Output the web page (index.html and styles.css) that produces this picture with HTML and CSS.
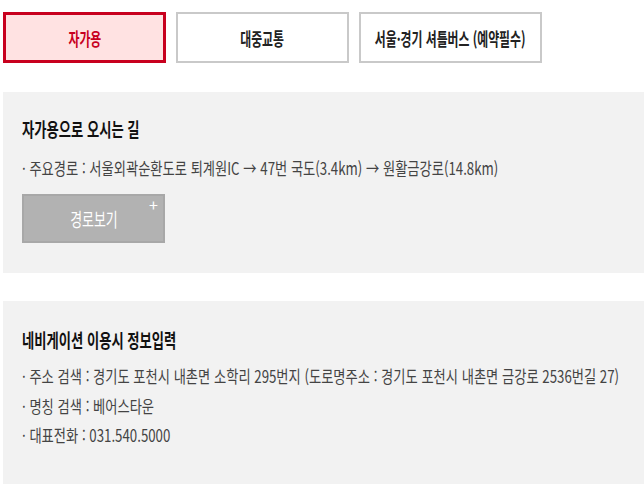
FILE: index.html
```html
<!DOCTYPE html>
<html lang="ko">
<head>
<meta charset="utf-8">
<link rel="stylesheet" href="styles.css">
</head>
<body>
<div class="page">
  <div class="tabs">
    <a class="tab tab-car active"><span class="cond">자가용</span></a>
    <a class="tab tab-bus"><span class="cond">대중교통</span></a>
    <a class="tab tab-shuttle"><span class="cond">서울·경기 셔틀버스 (예약필수)</span></a>
  </div>

  <section class="box box-car">
    <h3 class="title"><span class="cond">자가용으로 오시는 길</span></h3>
    <p class="line"><span class="cond">· 주요경로 : 서울외곽순환도로 퇴계원IC → 47번 국도(3.4km) → 원활금강로(14.8km)</span></p>
    <a class="route-btn"><span class="cond">경로보기</span><span class="plus">+</span></a>
  </section>

  <section class="box box-nav">
    <h3 class="title"><span class="cond">네비게이션 이용시 정보입력</span></h3>
    <ul class="list">
      <li class="line"><span class="cond">· 주소 검색 : 경기도 포천시 내촌면 소학리 295번지 (도로명주소 : 경기도 포천시 내촌면 금강로 2536번길 27)</span></li>
      <li class="line"><span class="cond">· 명칭 검색 : 베어스타운</span></li>
      <li class="line"><span class="cond">· 대표전화 : 031.540.5000</span></li>
    </ul>
  </section>
</div>
</body>
</html>
```

FILE: styles.css
```css
* { box-sizing: border-box; }
html, body { margin: 0; padding: 0; background: #fff; }
body {
  font-family: "Noto Sans CJK KR", "Noto Sans", sans-serif;
  color: #444;
  overflow: hidden;
}
.page { padding-left: 3px; overflow: hidden; }

.cond {
  display: inline-block;
  white-space: nowrap;
  transform: scaleX(0.78);
  transform-origin: 0 50%;
}

.tabs {
  display: flex;
  gap: 10px;
  margin-top: 12px;
  height: 51px;
}
.tab {
  display: flex;
  align-items: center;
  justify-content: center;
  border: 2px solid #c9c9c9;
  background: #fff;
  color: #222;
  font-size: 18px;
  font-weight: 700;
  text-decoration: none;
}
.tab .cond { transform-origin: 50% 50%; transform: scaleX(0.66); }
.tab-car { width: 163px; }
.tab-bus { width: 173px; }
.tab-shuttle { width: 183px; }
.tab.active {
  border: 3px solid #c8001e;
  background: #ffe2e2;
  color: #c8001e;
}

.box {
  background: #f2f2f2;
  padding: 27px 0 0 19px;
  overflow: hidden;
}
.box-car { margin-top: 29px; height: 181px; }
.box-nav { margin-top: 28px; height: 183px; padding-top: 29px; }

.title {
  margin: 0;
  font-size: 19px;
  line-height: 20px;
  font-weight: 700;
  color: #111;
}
.title .cond { transform: scaleX(0.7); }

.line {
  margin: 0;
  font-size: 17px;
  color: #444;
  white-space: nowrap;
}
.box-car .line { margin-top: 16px; line-height: 26px; }

.list { list-style: none; margin: 11px 0 0; padding: 0; }
.list .line { line-height: 30px; }
.list .line:nth-child(3) { line-height: 28px; }

.route-btn {
  position: relative;
  display: flex;
  align-items: center;
  justify-content: center;
  width: 143px;
  height: 49px;
  margin-top: 13px;
  background: #b2b2b2;
  border: 2px solid #a8a8a8;
  color: #fff;
  font-size: 19px;
  text-decoration: none;
}
.route-btn .cond { transform-origin: 50% 50%; transform: scaleX(0.68); }
.route-btn .plus {
  position: absolute;
  right: 5px;
  top: -1px;
  font-size: 16px;
  line-height: 18px;
  color: #fff;
}
```
